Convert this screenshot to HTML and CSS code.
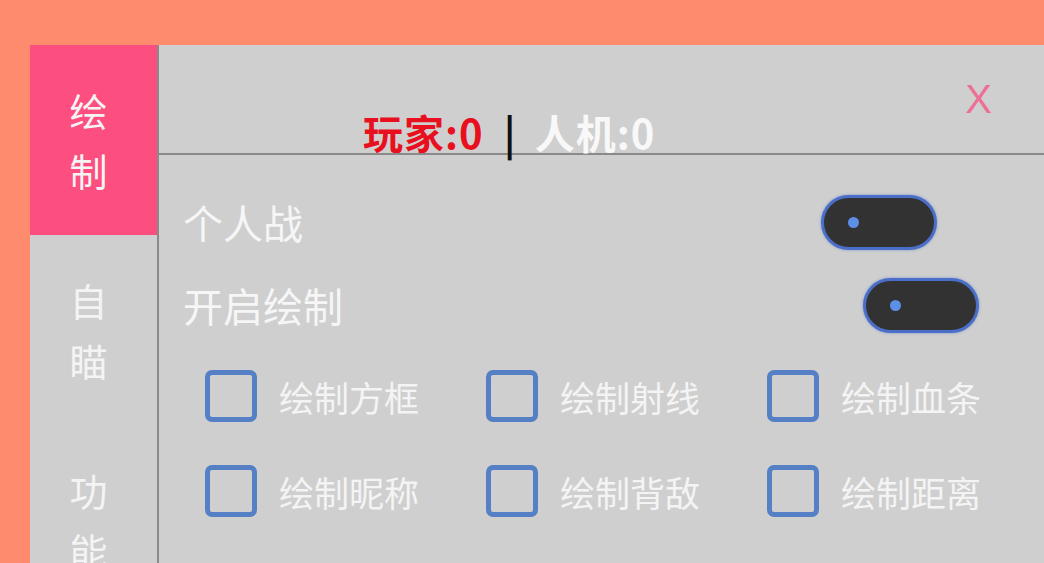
FILE: index.html
```html
<!DOCTYPE html>
<html>

<head>
    <title>绘制菜单</title>
    <link rel="stylesheet" href="styles.css">
</head>

<body>
    <div class="panel">
        <div class="sidebar">
            <div class="tab active">绘<br>制</div>
            <div class="tab">自<br>瞄</div>
            <div class="tab">功<br>能</div>
        </div>

        <div class="main">
            <div class="header">
                <div class="count">
                    <span class="player">玩家:0</span>
                    <span class="sep">|</span>
                    <span class="bot">人机:0</span>
                </div>
                <span class="close">X</span>
            </div>

            <div class="content">
                <div class="switch-row">
                    <span class="label">个人战</span>
                    <div class="toggle"><span class="dot"></span></div>
                </div>
                <div class="switch-row second">
                    <span class="label">开启绘制</span>
                    <div class="toggle"><span class="dot"></span></div>
                </div>

                <div class="options">
                    <label class="option"><span class="box"></span>绘制方框</label>
                    <label class="option"><span class="box"></span>绘制射线</label>
                    <label class="option"><span class="box"></span>绘制血条</label>
                    <label class="option"><span class="box"></span>绘制昵称</label>
                    <label class="option"><span class="box"></span>绘制背敌</label>
                    <label class="option"><span class="box"></span>绘制距离</label>
                </div>
            </div>
        </div>
    </div>
</body>

</html>
```

FILE: styles.css
```css
body {
    margin: 0;
    height: 563px;
    overflow: hidden;
    background-color: #ff8b6f;
    font-family: "Noto Sans CJK SC", "Noto Sans", sans-serif;
}

.panel {
    display: flex;
    margin: 45px 0 0 30px;
    height: 518px;
    background-color: #cfcfcf;
}

.sidebar {
    width: 127px;
    border-right: 2px solid #8a8a8a;
    flex-shrink: 0;
}

.tab {
    height: 190px;
    display: flex;
    align-items: center;
    justify-content: center;
    padding-right: 10px;
    color: #f4f4f4;
    font-size: 38px;
    line-height: 60px;
    text-align: center;
}

.tab.active {
    background-color: #fd4e80;
}

.main {
    flex: 1;
}

.header {
    height: 108px;
    border-bottom: 2px solid #8a8a8a;
    position: relative;
}

.count {
    padding: 62px 0 0 204px;
    font-size: 40px;
    font-weight: bold;
    line-height: 50px;
    letter-spacing: 1px;
}

.player {
    color: #e8101e;
}

.sep {
    color: #111;
    margin: 0 8px 0 10px;
}

.bot {
    color: #f8f8f8;
}

.close {
    position: absolute;
    top: 29px;
    right: 56px;
    color: #ec6f96;
    font-size: 40px;
    font-family: "Liberation Sans", sans-serif;
    line-height: 50px;
}

.content {
    padding: 38px 0 0 24px;
}

.switch-row {
    display: flex;
    align-items: center;
    height: 58px;
    width: 754px;
    justify-content: space-between;
}

.switch-row.second {
    margin-top: 25px;
    width: 796px;
}

.label {
    color: #f6f6f6;
    font-size: 40px;
}

.toggle {
    width: 116px;
    height: 55px;
    border: 3px solid #4b6fc8;
    border-radius: 28px;
    background-color: #333233;
    display: flex;
    align-items: center;
    padding-left: 24px;
    box-sizing: border-box;
    box-shadow: 0 0 3px rgba(75, 111, 200, 0.6);
}

.dot {
    width: 11px;
    height: 11px;
    border-radius: 50%;
    background-color: #5c8fe6;
}

.options {
    display: grid;
    grid-template-columns: repeat(3, 281px);
    row-gap: 43px;
    padding: 36px 0 0 22px;
}

.option {
    display: flex;
    align-items: center;
    gap: 22px;
    color: #f4f4f4;
    font-size: 35px;
}

.box {
    width: 52px;
    height: 52px;
    border: 5px solid #5580c6;
    border-radius: 7px;
    box-sizing: border-box;
}
```
